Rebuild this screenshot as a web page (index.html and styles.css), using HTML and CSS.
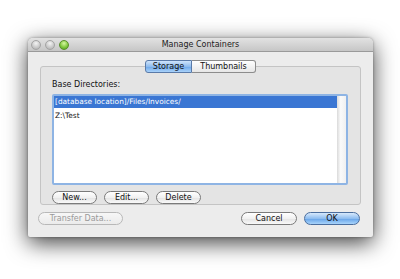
FILE: index.html
```html
<!DOCTYPE html>
<html lang="en">
<head>
    <meta charset="UTF-8">
    <title>Manage Containers</title>
    <link rel="stylesheet" href="styles.css">
</head>
<body>
    <div class="desktop">
        <div class="window">
            <!-- Title bar -->
            <div class="titlebar">
                <div class="lights">
                    <span class="light"></span>
                    <span class="light"></span>
                    <span class="light green"></span>
                </div>
                <div class="title">Manage Containers</div>
            </div>

            <div class="content">
                <div class="tabs">
                    <span class="tab active">Storage</span>
                    <span class="tab">Thumbnails</span>
                </div>
                <div class="group">
                    <p class="label">Base Directories:</p>
                    <div class="list">
                        <div class="rows">
                            <div class="row selected">[database location]/Files/Invoices/</div>
                            <div class="row">Z:\Test</div>
                        </div>
                        <div class="scrollbar"></div>
                    </div>
                    <div class="list-buttons">
                        <button class="btn">New...</button>
                        <button class="btn">Edit...</button>
                        <button class="btn">Delete</button>
                    </div>
                </div>

                <div class="footer">
                    <button class="btn disabled">Transfer Data...</button>
                    <div class="actions">
                        <button class="btn wide">Cancel</button>
                        <button class="btn wide primary">OK</button>
                    </div>
                </div>
            </div>
        </div>
    </div>
</body>
</html>
```

FILE: styles.css
```css
* {
    margin: 0;
    padding: 0;
    box-sizing: border-box;
    font-family: 'Lucida Grande', 'DejaVu Sans', sans-serif;
}

body {
    background: #fff;
    width: 400px;
    height: 279px;
    overflow: hidden;
}

.desktop {
    padding: 38px 0 0 28px;
}

.window {
    width: 345px;
    height: 199px;
    background: #ececec;
    border-radius: 5px 5px 2px 2px;
    box-shadow: 0 6px 22px rgba(0, 0, 0, 0.75), 0 0 3px rgba(0, 0, 0, 0.35);
    display: flex;
    flex-direction: column;
}

.titlebar {
    position: relative;
    height: 14px;
    background: linear-gradient(#e2e2e2, #c6c6c6);
    border-bottom: 1px solid #9a9a9a;
    border-radius: 5px 5px 0 0;
    display: flex;
    align-items: center;
    justify-content: center;
}

.lights {
    position: absolute;
    left: 3px;
    top: 2px;
    display: flex;
    gap: 4px;
}

.light {
    width: 10px;
    height: 10px;
    border-radius: 50%;
    background: radial-gradient(circle at 50% 30%, #f4f4f4, #c0c0c0 70%, #a8a8a8);
    border: 1px solid #a4a4a4;
}

.light.green {
    background: radial-gradient(circle at 50% 30%, #d6f7a0, #7cc53a 60%, #4e9a1c);
    border-color: #5a8f2c;
}

.title {
    font-size: 8px;
    color: #222;
}

.content {
    flex: 1;
    padding: 8px 12px 0 12px;
    display: flex;
    flex-direction: column;
}

.tabs {
    position: relative;
    z-index: 1;
    display: flex;
    justify-content: center;
    margin-bottom: -7px;
}

.tab {
    width: 64px;
    height: 13px;
    font-size: 8px;
    line-height: 11px;
    text-align: center;
    color: #111;
    background: linear-gradient(#ffffff, #e6e6e6);
    border: 1px solid #8c8c8c;
    border-left: none;
    border-radius: 0 3px 3px 0;
}

.tab.active {
    width: 47px;
    border-left: 1px solid #5a7aa8;
    border-color: #5a7aa8;
    border-radius: 3px 0 0 3px;
    background: linear-gradient(#cfe4fb, #8fbcee 50%, #6ca6e8 51%, #a9d2fa);
}

.group {
    height: 139px;
    border: 1px solid #c4c4c4;
    border-radius: 3px;
    background: #e4e4e4;
    padding: 13px 12px 0 11px;
}

.label {
    font-size: 8px;
    color: #111;
    height: 14px;
}

.list {
    height: 91px;
    display: flex;
    background: #fff;
    border: 2px solid #8eb4e4;
    border-radius: 2px;
}

.rows {
    flex: 1;
}

.row {
    height: 11px;
    font-size: 7.4px;
    line-height: 11px;
    padding-left: 1px;
    color: #111;
    margin-top: 2px;
}

.row.selected {
    margin-top: 0;
    height: 12px;
    line-height: 12px;
    background: #3a76d3;
    color: #fff;
}

.scrollbar {
    width: 9px;
    background: linear-gradient(90deg, #dadada, #fafafa 40%, #f0f0f0);
}

.list-buttons {
    display: flex;
    gap: 7px;
    margin-top: 6px;
}

.btn {
    height: 13px;
    font-size: 8px;
    line-height: 11px;
    color: #111;
    padding: 0 6px;
    border: 1px solid #7a7a7a;
    border-radius: 7px;
    background: linear-gradient(#ffffff, #f1f1f1 50%, #e3e3e3 51%, #f9f9f9);
    min-width: 45px;
}

.btn.disabled {
    color: #9a9a9a;
    border-color: #b8b8b8;
    background: linear-gradient(#f7f7f7, #ebebeb);
}

.btn.wide {
    width: 56px;
}

.btn.primary {
    border-color: #4b6e9e;
    background: linear-gradient(#d7e9fc, #8ebdf0 50%, #64a2e8 51%, #a9d4fb);
}

.footer {
    display: flex;
    justify-content: space-between;
    align-items: center;
    padding: 7px 1px 0 0;
    margin-left: -2px;
}

.footer .btn.disabled {
    width: 85px;
}

.actions {
    display: flex;
    gap: 7px;
}
```
